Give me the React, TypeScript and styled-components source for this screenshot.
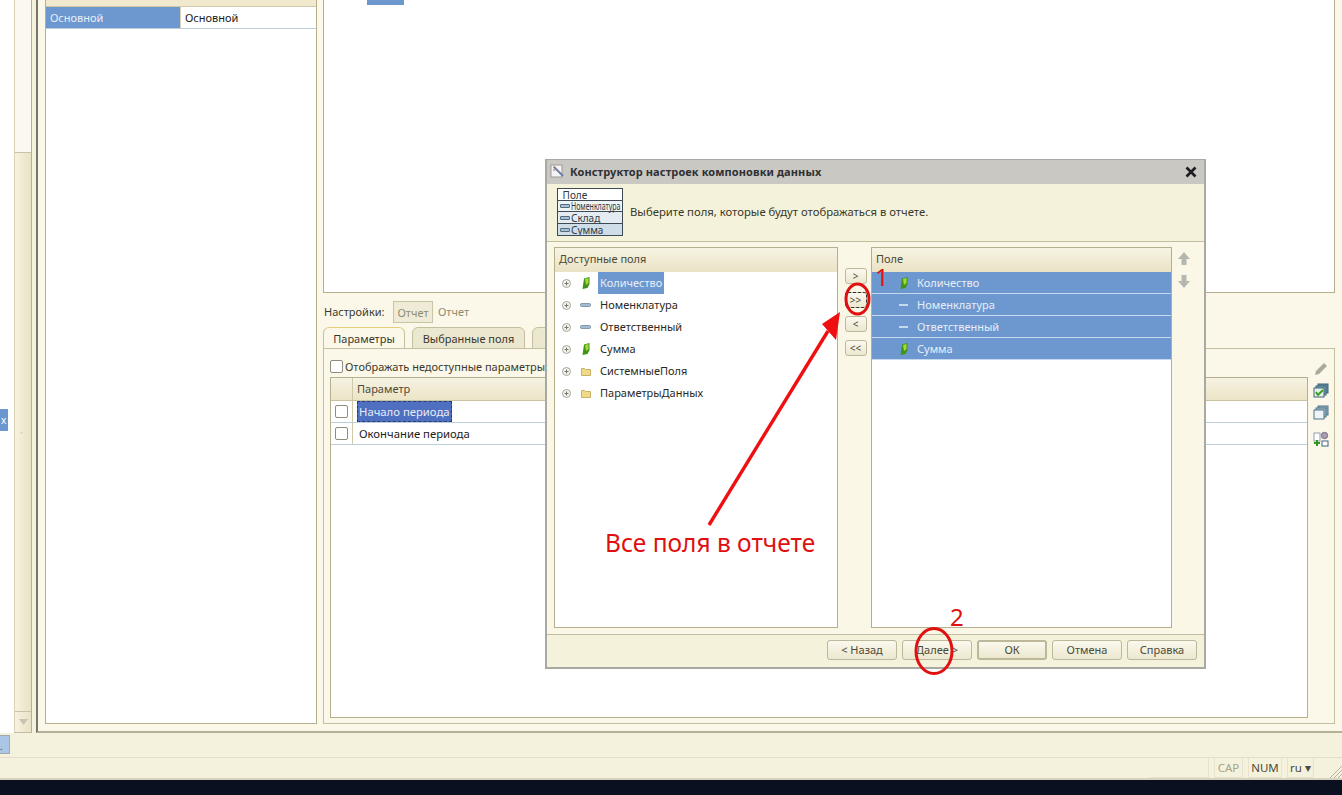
import React from "react";
import styled, { createGlobalStyle } from "styled-components";

const Global = createGlobalStyle`
  html, body { margin: 0; padding: 0; width: 100%; height: 100%; overflow: hidden; }
  body { background: #f4f1dd; font-family: "Noto Sans", "Open Sans", sans-serif; font-size: 11px; color: #2b2a20; }
  * { box-sizing: border-box; }
`;

const Page = styled.div`
  position: relative;
  width: 1342px;
  height: 795px;
  display: flex;
  flex-direction: column;
  overflow: hidden;
`;

const Main = styled.div`
  height: 733px;
  display: flex;
`;

const LeftStrip = styled.div`
  width: 14px;
  background: #fff;
  position: relative;
`;

const SideTab = styled.div`
  position: absolute;
  left: 0;
  top: 409px;
  width: 8px;
  height: 22px;
  background: #6b97d1;
  color: #fff;
  font-size: 10px;
  line-height: 22px;
  padding-left: 1px;
`;

const Scroll = styled.div`
  width: 18px;
  height: 733px;
  display: flex;
  flex-direction: column;
  border-left: 1px solid #d8d3b8;
  border-right: 1px solid #b6b197;
  border-bottom: 1px solid #c4bfa3;
  background: linear-gradient(90deg, #f6f2de, #e8e2c6);
`;

const Thumb = styled.div`
  height: 153px;
  background: #fbf9ef;
  border-bottom: 1px solid #c9c4a8;
`;

const ScrollTrack = styled.div`
  flex: 1;
  display: flex;
  align-items: center;
  justify-content: center;
  border-bottom: 1px solid #c9c4a8;
  padding-right: 3px;
  color: #a8a48d;
  font-size: 7px;
`;

const ScrollEnd = styled.div`
  height: 20px;
  display: flex;
  align-items: center;
  justify-content: center;
`;

const Content = styled.div`
  flex: 1;
  margin-left: 4px;
  height: 733px;
  border-left: 2px solid #77746a;
  border-bottom: 2px solid #b4af96;
  background: #fbf8e9;
  padding: 0 0 7px 7px;
  display: flex;
  gap: 6px;
`;

const LeftPane = styled.div`
  width: 272px;
  background: #fff;
  border: 1px solid #b5af8e;
  border-top: 0;
`;

const LeftHead = styled.div`
  height: 7px;
  display: flex;
  background: #f0e9ce;
  border-bottom: 1px solid #cfc9aa;
`;

const LeftRow = styled.div`
  height: 22px;
  display: flex;
  border-bottom: 1px solid #bcd0dc;
  line-height: 21px;
`;

const LeftCell = styled.div<{ $sel?: boolean }>`
  width: ${(p) => (p.$sel ? "134px" : "auto")};
  flex: ${(p) => (p.$sel ? "none" : "1")};
  padding-left: 4px;
  background: ${(p) => (p.$sel ? "#6c98cf" : "#fff")};
  color: ${(p) => (p.$sel ? "#e8eef8" : "#1c1c18")};
  border-left: ${(p) => (p.$sel ? "0" : "1px solid #d8d3b8")};
`;

const RightCol = styled.div`
  flex: 1;
  display: flex;
  flex-direction: column;
`;

const TopPane = styled.div`
  height: 293px;
  background: #fff;
  border: 1px solid #b5af8e;
  border-top: 0;
  margin-right: 7px;
`;

const TopMark = styled.div`
  width: 37px;
  height: 5px;
  margin-left: 43px;
  background: #6c98cf;
`;

const SettingsRow = styled.div`
  height: 33px;
  display: flex;
  align-items: center;
  padding-top: 4px;
  color: #3c3a2c;
`;

const SettingsLabel = styled.span`
  width: 70px;
  padding-left: 1px;
`;

const SettingsToggle = styled.span`
  width: 40px;
  height: 22px;
  border: 1px solid #c9c4a6;
  background: #efebd6;
  line-height: 21px;
  text-align: center;
  color: #8f8b70;
`;

const SettingsText = styled.span`
  margin-left: 5px;
  color: #8f8b70;
`;

const Tabs = styled.div`
  height: 23px;
  display: flex;
  gap: 7px;
  align-items: flex-end;
`;

const Tab = styled.div<{ $on?: boolean; $w: number }>`
  width: ${(p) => p.$w}px;
  height: 22px;
  flex: none;
  text-align: center;
  line-height: 21px;
  border: 1px solid #c5bf9f;
  border-bottom: ${(p) => (p.$on ? "0" : "1px solid #c5bf9f")};
  border-radius: 6px 6px 0 0;
  background: ${(p) => (p.$on ? "#fbf8e9" : "#ece7cf")};
  border-top-color: ${(p) => (p.$on ? "#e6cf7c" : "#c5bf9f")};
  overflow: hidden;
  color: #3a382c;
`;

const TabPanel = styled.div`
  flex: 1;
  margin-top: -1px;
  margin-right: 7px;
  border: 1px solid #c5bf9f;
  background: #fbf8e9;
  padding: 7px 0 5px 6px;
  display: flex;
  gap: 2px;
`;

const PanelMain = styled.div`
  flex: 1;
  display: flex;
  flex-direction: column;
`;

const CheckLine = styled.div`
  height: 21px;
  display: flex;
  align-items: center;
  gap: 2px;
  padding-bottom: 1px;
  color: #3a382c;
`;

const Check = styled.span`
  width: 13px;
  height: 13px;
  flex: none;
  background: #fff;
  border: 1px solid #8f8c7a;
  border-radius: 2px;
`;

const Grid = styled.div`
  flex: 1;
  border: 1px solid #b5af8e;
  background: #fff;
  font-size: 11.3px;
`;

const GridHead = styled.div`
  height: 23px;
  display: flex;
  background: linear-gradient(#f7f3e3, #ece4c6);
  border-bottom: 1px solid #c9c3a4;
  line-height: 21px;
  font-size: 11px;
  color: #4c4a38;
`;

const CheckCol = styled.div`
  width: 22px;
  flex: none;
  border-right: 1px solid #cfc9aa;
  display: flex;
  align-items: center;
  justify-content: center;
  padding-right: 1px;
`;

const HeadTitle = styled.div`
  padding-left: 4px;
`;

const GridRow = styled.div`
  height: 22px;
  display: flex;
  border-bottom: 1px solid #bcd0dc;
`;

const GridText = styled.span<{ $sel?: boolean }>`
  margin-left: 4px;
  padding: 0 2px;
  height: 21px;
  line-height: 21px;
  color: ${(p) => (p.$sel ? "#e8ecf8" : "#1c1c18")};
  background: ${(p) => (p.$sel ? "#4f6fc0" : "transparent")};
  outline: ${(p) => (p.$sel ? "1px dashed #2b3b72" : "0")};
  outline-offset: -1px;
`;

const SideTools = styled.div`
  width: 22px;
  display: flex;
  flex-direction: column;
  align-items: center;
  padding-top: 3px;
  margin-right: 2px;
`;

const ToolSlot = styled.div<{ $h: number }>`
  height: ${(p) => p.$h}px;
  display: flex;
  align-items: center;
  justify-content: center;
`;

const TaskBar = styled.div`
  height: 24px;
  display: flex;
  padding-top: 2px;
`;

const TaskTab = styled.div`
  width: 10px;
  height: 19px;
  background: #a9c6e6;
  border: 1px solid #9da9ab;
  border-left: 0;
  line-height: 22px;
  font-size: 9px;
  color: #333;
`;

const Status = styled.div`
  height: 23px;
  display: flex;
  justify-content: flex-end;
  gap: 5px;
  padding: 0 28px 0 0;
  border-top: 1px solid #e2decb;
  border-bottom: 2px solid #d5d2bd;
  position: relative;
`;

const StatusGap = styled.div`
  width: 60px;
  height: 20px;
  border-right: 1px solid #e7e3ce;
  border-bottom: 1px solid #e7e3ce;
`;

const StatusCell = styled.div<{ $w: number; $off?: boolean }>`
  width: ${(p) => p.$w}px;
  height: 20px;
  text-align: center;
  line-height: 20px;
  font-size: 11.5px;
  border: 1px solid #e7e3ce;
  border-top: 0;
  color: ${(p) => (p.$off ? "#a8a388" : "#4c4a38")};
`;

const Grip = styled.svg`
  position: absolute;
  right: 0;
  bottom: 0;
`;

const Desktop = styled.div`
  flex: 1;
  background: #0b1020;
`;

const Dialog = styled.div`
  position: absolute;
  left: 545px;
  top: 159px;
  width: 661px;
  height: 510px;
  display: flex;
  flex-direction: column;
  background: #faf7e6;
  border: 2px solid #a9a9a4;
  border-top-width: 1px;
`;

const TitleBar = styled.div`
  height: 24px;
  flex: none;
  display: flex;
  align-items: center;
  background: #c9c8c3;
  padding: 0 7px 1px 3px;
  font-weight: 700;
  letter-spacing: 0.1px;
  color: #2f3034;
  gap: 4px;
`;

const TitleText = styled.div`
  flex: 1;
`;

const Intro = styled.div`
  height: 58px;
  flex: none;
  display: flex;
  align-items: center;
  gap: 7px;
  padding: 0 0 2px 10px;
  background: #f5f2dc;
  border-bottom: 1px solid #c4bea0;
  font-size: 11.3px;
  color: #3a3826;
`;

const Thumbnail = styled.div`
  width: 66px;
  height: 48px;
  flex: none;
  border: 1px solid #3f4a52;
  display: flex;
  flex-direction: column;
  overflow: hidden;
  color: #2e3a42;
  background: #fff;
`;

const ThumbRow = styled.div<{ $bg: string; $h: number }>`
  height: ${(p) => p.$h}px;
  display: flex;
  align-items: center;
  gap: 1px;
  padding: 1px 0 0 2px;
  background: ${(p) => p.$bg};
  border-bottom: 1px solid #3f4a52;
  white-space: nowrap;
  line-height: 1;
  font-size: 10px;
  &:last-child { border-bottom: 0; }
`;

const ThumbWord = styled.span<{ $narrow?: boolean }>`
  display: inline-block;
  transform-origin: left center;
  transform: ${(p) => (p.$narrow ? "scaleX(0.7)" : "none")};
`;

const ThumbDash = styled.span`
  width: 10px;
  height: 4px;
  flex: none;
  background: #a8c0d4;
  border: 1px solid #53697c;
  border-radius: 1px;
`;

const Body = styled.div`
  flex: 1;
  display: flex;
  padding: 5px 0 6px 7px;
`;

const FieldList = styled.div<{ $w: number }>`
  width: ${(p) => p.$w}px;
  flex: none;
  display: flex;
  flex-direction: column;
  background: #fff;
  border: 1px solid #b5af8e;
`;

const ListHead = styled.div`
  height: 24px;
  flex: none;
  background: linear-gradient(#f8f4e4, #eae2c4);
  line-height: 21px;
  padding-left: 4px;
  color: #4c4a38;
`;

const Row = styled.div<{ $picked?: boolean }>`
  height: 22px;
  flex: none;
  display: flex;
  align-items: center;
  background: ${(p) => (p.$picked ? "#6c98cf" : "transparent")};
  border-bottom: ${(p) => (p.$picked ? "1px solid #c6d8ee" : "0")};
  color: ${(p) => (p.$picked ? "#e8eef8" : "#2b2a20")};
`;

const Expander = styled.span`
  width: 9px;
  height: 9px;
  margin: 0 9px 0 7px;
  flex: none;
  display: flex;
  align-items: center;
  justify-content: center;
`;

const RowIcon = styled.span<{ $gap: number }>`
  width: 11px;
  flex: none;
  margin-right: ${(p) => p.$gap}px;
  display: flex;
  justify-content: center;
`;

const RowText = styled.span<{ $sel?: boolean }>`
  height: 22px;
  line-height: 22px;
  padding: 0 2px;
  background: ${(p) => (p.$sel ? "#6c98cf" : "transparent")};
  color: ${(p) => (p.$sel ? "#e8eef8" : "inherit")};
`;

const Spacer = styled.div`
  width: 26px;
  flex: none;
`;

const Movers = styled.div`
  width: 33px;
  flex: none;
  display: flex;
  flex-direction: column;
  align-items: center;
  gap: 8px;
  padding: 21px 0 0 2px;
`;

const Mover = styled.div<{ $focus?: boolean }>`
  width: 22px;
  height: 16px;
  line-height: 14px;
  text-align: center;
  font-size: 10px;
  border: 1px solid #bdb89a;
  border-radius: 3px;
  background: linear-gradient(#fbf9ee, #ece7cf);
  color: #4c4a38;
  outline: ${(p) => (p.$focus ? "1px dashed #333" : "0")};
  outline-offset: -1px;
`;

const Arrows = styled.div`
  width: 25px;
  flex: none;
  display: flex;
  flex-direction: column;
  align-items: center;
  gap: 8px;
  padding: 4px 2px 0 0;
`;

const Footer = styled.div`
  height: 33px;
  flex: none;
  display: flex;
  justify-content: flex-end;
  gap: 5px;
  padding: 5px 7px 0 0;
  border-top: 1px solid #c4bea0;
  background: #f5f2dc;
`;

const FootButton = styled.div<{ $main?: boolean }>`
  width: 70px;
  height: 20px;
  text-align: center;
  border: 1px solid #bdb89a;
  border-width: ${(p) => (p.$main ? "2px" : "1px")};
  line-height: ${(p) => (p.$main ? "16px" : "18px")};
  border-radius: 3px;
  background: linear-gradient(#fbf9ee, #ece7cf);
  color: #4c4a38;
`;

const Overlay = styled.svg`
  position: absolute;
  left: 0;
  top: 0;
  pointer-events: none;
`;

const Note = styled.div<{ $x: number; $y: number; $size: number }>`
  position: absolute;
  left: ${(p) => p.$x}px;
  top: ${(p) => p.$y}px;
  font-size: ${(p) => p.$size}px;
  line-height: 1;
  color: #e01010;
  font-family: "Noto Sans", "Open Sans", sans-serif;
  white-space: nowrap;
`;

const Plus = () => (
  <svg width="9" height="9" viewBox="0 0 9 9">
    <circle cx="4.5" cy="4.5" r="4" fill="#f4f4ee" stroke="#a5a59a" />
    <path d="M2.5 4.5h4M4.5 2.5v4" stroke="#77776c" />
  </svg>
);

const Resource = () => (
  <svg width="8" height="12" viewBox="0 0 8 12">
    <path d="M2 1.5 7.5 0 7.5 7 5.5 11 .5 12z" fill="#3f9418" />
    <path d="M3 2 6.5 1 6.5 6 4 8z" fill="#a8d83c" />
  </svg>
);

const Dim = () => (
  <svg width="11" height="4" viewBox="0 0 11 4">
    <rect x="0.5" y="0.5" width="10" height="3" rx="1" fill="#a3bbd0" stroke="#5f7f98" strokeWidth="0.7" />
  </svg>
);

const DimLight = () => (
  <svg width="9" height="2" viewBox="0 0 9 2">
    <rect width="9" height="2" fill="#c9d9ec" />
  </svg>
);

const Folder = () => (
  <svg width="10" height="9" viewBox="0 0 10 9">
    <path d="M.5 1.5h3l1 1h5v6h-9z" fill="#f1d98a" stroke="#c9b26a" />
  </svg>
);

const FIELDS = [
  { name: "Количество", icon: "res" },
  { name: "Номенклатура", icon: "dim" },
  { name: "Ответственный", icon: "dim" },
  { name: "Сумма", icon: "res" },
];

const App = () => {
  return (
    <Page>
      <Global />
      <Main>
        <LeftStrip>
          <SideTab>x</SideTab>
        </LeftStrip>
        <Scroll>
          <Thumb />
          <ScrollTrack>◦</ScrollTrack>
          <ScrollEnd>
            <svg width="9" height="6" viewBox="0 0 9 6">
              <path d="M0 0h9L4.5 6z" fill="#c6c3b2" />
            </svg>
          </ScrollEnd>
        </Scroll>
        <Content>
          <LeftPane>
            <LeftHead />
            <LeftRow>
              <LeftCell $sel>Основной</LeftCell>
              <LeftCell>Основной</LeftCell>
            </LeftRow>
          </LeftPane>
          <RightCol>
            <TopPane>
              <TopMark />
            </TopPane>
            <SettingsRow>
              <SettingsLabel>Настройки:</SettingsLabel>
              <SettingsToggle>Отчет</SettingsToggle>
              <SettingsText>Отчет</SettingsText>
            </SettingsRow>
            <Tabs>
              <Tab $on $w={82}>Параметры</Tab>
              <Tab $w={113}>Выбранные поля</Tab>
              <Tab $w={60}>Отбор</Tab>
            </Tabs>
            <TabPanel>
              <PanelMain>
                <CheckLine>
                  <Check />
                  Отображать недоступные параметры
                </CheckLine>
                <Grid>
                  <GridHead>
                    <CheckCol />
                    <HeadTitle>Параметр</HeadTitle>
                  </GridHead>
                  <GridRow>
                    <CheckCol><Check /></CheckCol>
                    <GridText $sel>Начало периода</GridText>
                  </GridRow>
                  <GridRow>
                    <CheckCol><Check /></CheckCol>
                    <GridText>Окончание периода</GridText>
                  </GridRow>
                </Grid>
              </PanelMain>
              <SideTools>
                <ToolSlot $h={20}>
                  <svg width="14" height="14" viewBox="0 0 14 14">
                    <path d="M10 1l3 3-8 8-4 1 1-4z" fill="#a9a99c" />
                  </svg>
                </ToolSlot>
                <ToolSlot $h={22}>
                  <svg width="16" height="15" viewBox="0 0 16 15">
                    <rect x="5" y="1" width="10" height="9" fill="#5f8fa3" stroke="#3f6375" />
                    <rect x="3" y="3" width="10" height="9" fill="#7fa8ba" stroke="#3f6375" />
                    <rect x="1" y="5" width="10" height="9" fill="#e8f0ec" stroke="#3f6375" />
                    <path d="M3 9l2 3 5-5" fill="none" stroke="#3aa01e" strokeWidth="2" />
                  </svg>
                </ToolSlot>
                <ToolSlot $h={22}>
                  <svg width="16" height="15" viewBox="0 0 16 15">
                    <rect x="5" y="1" width="10" height="9" fill="#8fb0c2" stroke="#4f7386" />
                    <rect x="3" y="3" width="10" height="9" fill="#a9c4d2" stroke="#4f7386" />
                    <rect x="1" y="5" width="10" height="9" fill="#eef4f6" stroke="#4f7386" />
                  </svg>
                </ToolSlot>
                <ToolSlot $h={32}>
                  <svg width="16" height="16" viewBox="0 0 16 16">
                    <rect x="1" y="2" width="6" height="8" fill="#fff" stroke="#8ea0b0" />
                    <rect x="9" y="10" width="6" height="5" fill="#fff" stroke="#44607a" />
                    <circle cx="11.5" cy="4.5" r="3.2" fill="#a99cb0" stroke="#7d7088" />
                    <path d="M4 9v6M1 12h6" stroke="#2f9a1e" strokeWidth="2" />
                  </svg>
                </ToolSlot>
              </SideTools>
            </TabPanel>
          </RightCol>
        </Content>
      </Main>
      <TaskBar>
        <TaskTab>.</TaskTab>
      </TaskBar>
      <Status>
        <StatusGap />
        <StatusCell $w={29} $off>CAP</StatusCell>
        <StatusCell $w={34}>NUM</StatusCell>
        <StatusCell $w={27}>ru ▾</StatusCell>
        <Grip width="12" height="12" viewBox="0 0 12 12">
          <path d="M0 12 12 0M4 12l8-8M8 12l4-4" stroke="#b9b59d" />
        </Grip>
      </Status>
      <Desktop />

      <Dialog>
        <TitleBar>
          <svg width="16" height="15" viewBox="0 0 16 15">
            <rect x="1" y="1" width="11" height="12" fill="#f4f4f4" stroke="#9a9a9a" />
            <path d="M4 3l9 9" stroke="#6b7fa8" strokeWidth="2" />
            <path d="M3 3l2 0M3 6h2" stroke="#c06060" />
          </svg>
          <TitleText>Конструктор настроек компоновки данных</TitleText>
          <svg width="12" height="12" viewBox="0 0 12 12">
            <path d="M1.5 1.5l9 9M10.5 1.5l-9 9" stroke="#1d1d20" strokeWidth="2.6" />
          </svg>
        </TitleBar>
        <Intro>
          <Thumbnail>
            <ThumbRow $bg="#fff" $h={12}>&nbsp;Поле</ThumbRow>
            <ThumbRow $bg="#eef3f6" $h={11}><ThumbDash /><ThumbWord $narrow>Номенклатура</ThumbWord></ThumbRow>
            <ThumbRow $bg="#e4ecf2" $h={12}><ThumbDash /><ThumbWord>Склад</ThumbWord></ThumbRow>
            <ThumbRow $bg="#cfdde8" $h={11}><ThumbDash /><ThumbWord>Сумма</ThumbWord></ThumbRow>
          </Thumbnail>
          Выберите поля, которые будут отображаться в отчете.
        </Intro>
        <Body>
          <FieldList $w={284}>
            <ListHead>Доступные поля</ListHead>
            {FIELDS.map((f, i) => (
              <Row key={f.name}>
                <Expander><Plus /></Expander>
                <RowIcon $gap={7}>{f.icon === "res" ? <Resource /> : <Dim />}</RowIcon>
                <RowText $sel={i === 0}>{f.name}</RowText>
              </Row>
            ))}
            <Row>
              <Expander><Plus /></Expander>
              <RowIcon $gap={7}><Folder /></RowIcon>
              <RowText>СистемныеПоля</RowText>
            </Row>
            <Row>
              <Expander><Plus /></Expander>
              <RowIcon $gap={7}><Folder /></RowIcon>
              <RowText>ПараметрыДанных</RowText>
            </Row>
          </FieldList>
          <Movers>
            <Mover>&gt;</Mover>
            <Mover $focus>&gt;&gt;</Mover>
            <Mover>&lt;</Mover>
            <Mover>&lt;&lt;</Mover>
          </Movers>
          <FieldList $w={301}>
            <ListHead>Поле</ListHead>
            {FIELDS.map((f) => (
              <Row key={f.name} $picked>
                <Spacer />
                <RowIcon $gap={6}>{f.icon === "res" ? <Resource /> : <DimLight />}</RowIcon>
                <RowText>{f.name}</RowText>
              </Row>
            ))}
          </FieldList>
          <Arrows>
            <svg width="14" height="15" viewBox="0 0 14 15">
              <path d="M7 1l6 7H9.5v6h-5V8H1z" fill="#b4b8b0" />
            </svg>
            <svg width="14" height="15" viewBox="0 0 14 15">
              <path d="M7 14l6-7H9.5V1h-5v6H1z" fill="#b4b8b0" />
            </svg>
          </Arrows>
        </Body>
        <Footer>
          <FootButton>&lt; Назад</FootButton>
          <FootButton>Далее &gt;</FootButton>
          <FootButton $main>ОК</FootButton>
          <FootButton>Отмена</FootButton>
          <FootButton>Справка</FootButton>
        </Footer>
      </Dialog>

      <Overlay width="1342" height="795" viewBox="0 0 1342 795">
        <ellipse cx="857.5" cy="299" rx="11.5" ry="15" fill="none" stroke="#e01010" strokeWidth="3" />
        <ellipse cx="934" cy="651" rx="18" ry="22.5" fill="none" stroke="#e01010" strokeWidth="3" />
        <path d="M709 525 828 331" stroke="#ee1010" strokeWidth="3.4" fill="none" />
        <path d="M840 312 822 324 836 340z" fill="#ee1010" />
      </Overlay>
      <Note $x={875} $y={265} $size={24}>1</Note>
      <Note $x={950} $y={605} $size={24}>2</Note>
      <Note $x={605} $y={531} $size={24.5}>Все поля в отчете</Note>
    </Page>
  );
};

export default App;
